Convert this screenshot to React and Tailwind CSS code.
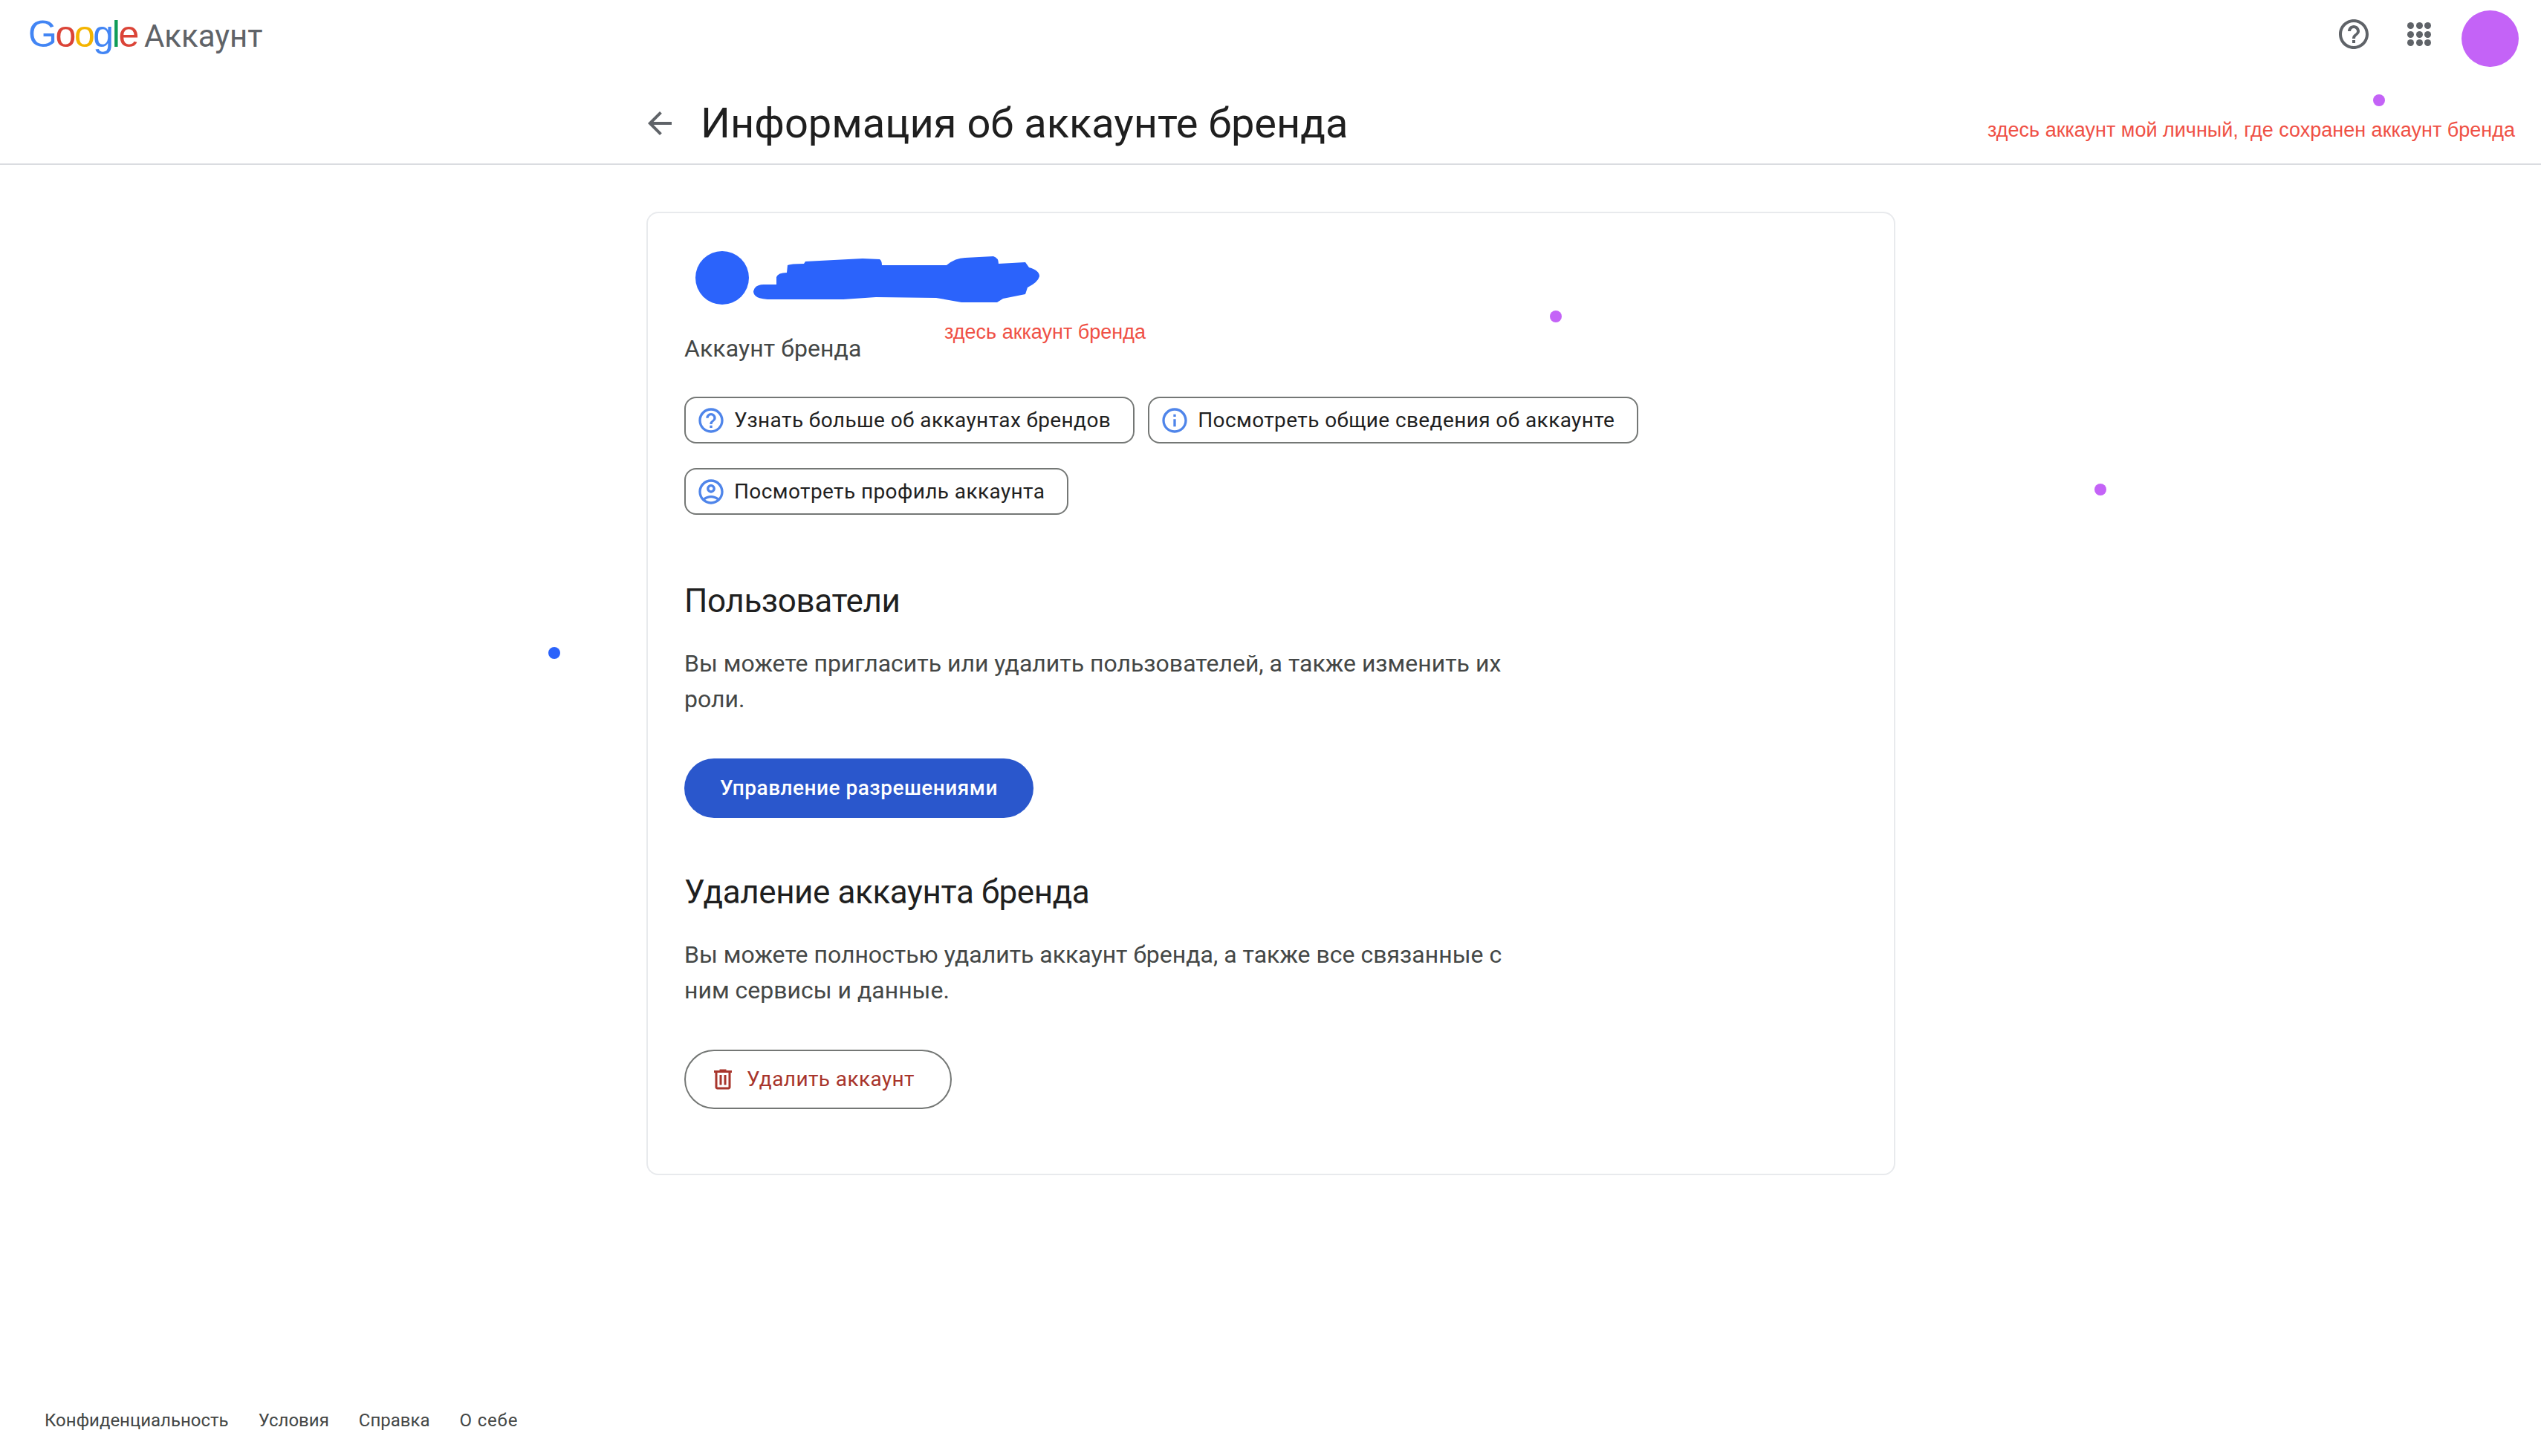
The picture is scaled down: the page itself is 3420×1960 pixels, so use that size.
const HELP = 'M11 18h2v-2h-2v2zm1-16C6.48 2 2 6.48 2 12s4.48 10 10 10 10-4.48 10-10S17.52 2 12 2zm0 18c-4.41 0-8-3.59-8-8s3.59-8 8-8 8 3.59 8 8-3.59 8-8 8zm0-14c-2.21 0-4 1.79-4 4h2c0-1.1.9-2 2-2s2 .9 2 2c0 2-3 1.75-3 5h2c0-2.25 3-2.5 3-5 0-2.21-1.79-4-4-4z'
const INFO = 'M11 7h2v2h-2zm0 4h2v6h-2zm1-9C6.48 2 2 6.48 2 12s4.48 10 10 10 10-4.48 10-10S17.52 2 12 2zm0 18c-4.41 0-8-3.59-8-8s3.59-8 8-8 8 3.59 8 8-3.59 8-8 8z'
const PERSON = 'M12 2C6.48 2 2 6.48 2 12s4.48 10 10 10 10-4.48 10-10S17.52 2 12 2zM7.35 18.5C8.66 17.56 10.26 17 12 17s3.34.56 4.65 1.5c-1.31.94-2.91 1.5-4.65 1.5s-3.34-.56-4.65-1.5zm10.79-1.38C16.45 15.8 14.32 15 12 15s-4.45.8-6.14 2.12C4.7 15.73 4 13.95 4 12c0-4.42 3.58-8 8-8s8 3.58 8 8c0 1.95-.7 3.73-1.86 5.12zM12 6c-1.93 0-3.5 1.57-3.5 3.5S10.07 13 12 13s3.5-1.57 3.5-3.5S13.93 6 12 6zm0 5c-.83 0-1.5-.67-1.5-1.5S11.17 8 12 8s1.5.67 1.5 1.5S12.83 11 12 11z'
const ARROW = 'M20 11H7.83l5.59-5.59L12 4l-8 8 8 8 1.41-1.41L7.83 13H20v-2z'
const TRASH = 'M15 4V3H9v1H4v2h1v13c0 1.1.9 2 2 2h10c1.1 0 2-.9 2-2V6h1V4h-5zm2 15H7V6h10v13zM9 8h2v9H9zm4 0h2v9h-2z'
const SCRIBBLE = 'M0 48 Q2 39 14 39 L31 39 L31 29 Q33 23 45 23 L46 13 Q50 11 68 11 L70 8 L147 4 L170 5 Q173 7 173 13 L260 13 Q272 3 285 3 L323 1 Q330 3 330 11 L366 9 L371 16 Q385 20 385 28 Q383 36 369 43 L366 52 L336 58 L328 63 L280 63 L246 57 L165 56 L121 59 L19 59 Q0 58 0 48 Z'

const dots = [0, 1, 2, 3, 4, 5, 6, 7, 8]

function Icon({ d, className }) {
  return (
    <svg viewBox="0 0 24 24" fill="currentColor" className={className}>
      <path d={d} />
    </svg>
  )
}

function ChipLink({ icon, label }) {
  return (
    <a className="flex h-[63px] items-center rounded-[16px] border-2 border-[#747775] pl-[14px] pr-[30px] text-[28px] font-[450] tracking-[0.4px] text-[#1f1f1f]">
      <Icon d={icon} className="mr-[11px] h-10 w-10 shrink-0 text-[#4f85ea]" />
      {label}
    </a>
  )
}

function Section({ title, children }) {
  return (
    <section>
      <h2 className="text-[44px] leading-[56px] tracking-[-0.4px] text-[#1f1f1f]">{title}</h2>
      <p className="mt-[32px] w-[1110px] text-[32px] leading-[48px] text-[#444746]">{children}</p>
    </section>
  )
}

export default function App() {
  return (
    <div className="relative flex h-[1960px] w-[3420px] flex-col overflow-hidden bg-white font-['Roboto',sans-serif]">
      <header className="flex h-[92px] items-start justify-between pl-[38px] pr-[30px] pt-[14px]">
        <div className="flex items-baseline pt-[4px] leading-[56px]">
          <span className="font-['Liberation_Sans',sans-serif] text-[50px] tracking-[-2.4px]">
            <span className="text-[#4285f4]">G</span>
            <span className="text-[#db4437]">o</span>
            <span className="text-[#f4b400]">o</span>
            <span className="text-[#4285f4]">g</span>
            <span className="text-[#0f9d58]">l</span>
            <span className="text-[#db4437]">e</span>
          </span>
          <span className="ml-[9px] text-[42px] text-[#5f6368]">Аккаунт</span>
        </div>
        <div className="flex items-start">
          <Icon d={HELP} className="mt-[8px] h-12 w-12 text-[#5f6368]" />
          <div className="ml-[48px] mt-[16px] grid h-8 w-8 grid-cols-3 gap-x-[3px] gap-y-[2.5px]">
            {dots.map(i => (
              <span key={i} className="h-[9px] w-[9px] rounded-full bg-[#5f6368]" />
            ))}
          </div>
          <div className="ml-[41px] h-[76px] w-[77px] rounded-full bg-[#c463f7]" />
        </div>
      </header>

      <div className="flex h-[130px] items-center border-b-2 border-[#dadce0] pl-[864px] pt-[20px]">
        <Icon d={ARROW} className="h-12 w-12 text-[#5f6368]" />
        <h1 className="ml-[31px] text-[56px] leading-[72px] text-[#1f1f1f]">Информация об аккаунте бренда</h1>
      </div>

      <main className="ml-[870px] mt-[63px] h-[1297px] w-[1681px] rounded-[16px] border-2 border-[#e8eaed] pl-[49px] pt-[51px]">
        <div className="flex h-[72px] items-start pl-[15px]">
          <div className="h-[72px] w-[72px] rounded-full bg-[#2b63fb]" />
          <svg viewBox="0 0 385 63" className="ml-[6px] mt-[6px] h-[63px] w-[385px]">
            <path d={SCRIBBLE} fill="#2b63fb" />
          </svg>
        </div>
        <p className="mt-[39px] text-[32px] leading-[40px] tracking-[0.1px] text-[#444746]">Аккаунт бренда</p>

        <div className="mt-[45px] flex w-[1320px] flex-wrap gap-x-[18px] gap-y-[33px]">
          <ChipLink icon={HELP} label="Узнать больше об аккаунтах брендов" />
          <ChipLink icon={INFO} label="Посмотреть общие сведения об аккаунте" />
          <ChipLink icon={PERSON} label="Посмотреть профиль аккаунта" />
        </div>

        <div className="mt-[88px]">
          <Section title="Пользователи">
            Вы можете пригласить или удалить пользователей, а также изменить их роли.
          </Section>
          <button className="mt-[56px] flex h-20 items-center rounded-full bg-[#2a57cc] px-[48px] text-[28px] font-medium tracking-[0.5px] text-white">
            Управление разрешениями
          </button>
        </div>

        <div className="mt-[72px]">
          <Section title="Удаление аккаунта бренда">
            Вы можете полностью удалить аккаунт бренда, а также все связанные с ним сервисы и данные.
          </Section>
          <button className="mt-[56px] flex h-20 items-center rounded-full border-2 border-[#747775] pl-[32px] pr-[48px] text-[28px] font-[450] tracking-[0.4px] text-[#a8352c]">
            <Icon d={TRASH} className="mr-[14px] h-9 w-9" />
            Удалить аккаунт
          </button>
        </div>
      </main>

      <footer className="mt-auto flex gap-x-[40px] pb-[32px] pl-[60px] text-[24px] leading-[32px] text-[#444746]">
        <a>Конфиденциальность</a>
        <a>Условия</a>
        <a>Справка</a>
        <a className="tracking-[0.8px]">О себе</a>
      </footer>

      {/* notes drawn on top of the screenshot */}
      <p className="absolute left-[2675px] top-[159px] font-['Liberation_Sans',sans-serif] text-[27px] leading-[32px] text-[#ef5045]">здесь аккаунт мой личный, где сохранен аккаунт бренда</p>
      <p className="absolute left-[1271px] top-[431px] font-['Liberation_Sans',sans-serif] text-[27px] leading-[32px] text-[#ef5045]">здесь аккаунт бренда</p>
      <span className="absolute left-[3194px] top-[127px] h-4 w-4 rounded-full bg-[#c463f7]" />
      <span className="absolute left-[2086px] top-[418px] h-4 w-4 rounded-full bg-[#c463f7]" />
      <span className="absolute left-[2819px] top-[651px] h-4 w-4 rounded-full bg-[#c463f7]" />
      <span className="absolute left-[738px] top-[871px] h-4 w-4 rounded-full bg-[#2b63fb]" />
    </div>
  )
}
